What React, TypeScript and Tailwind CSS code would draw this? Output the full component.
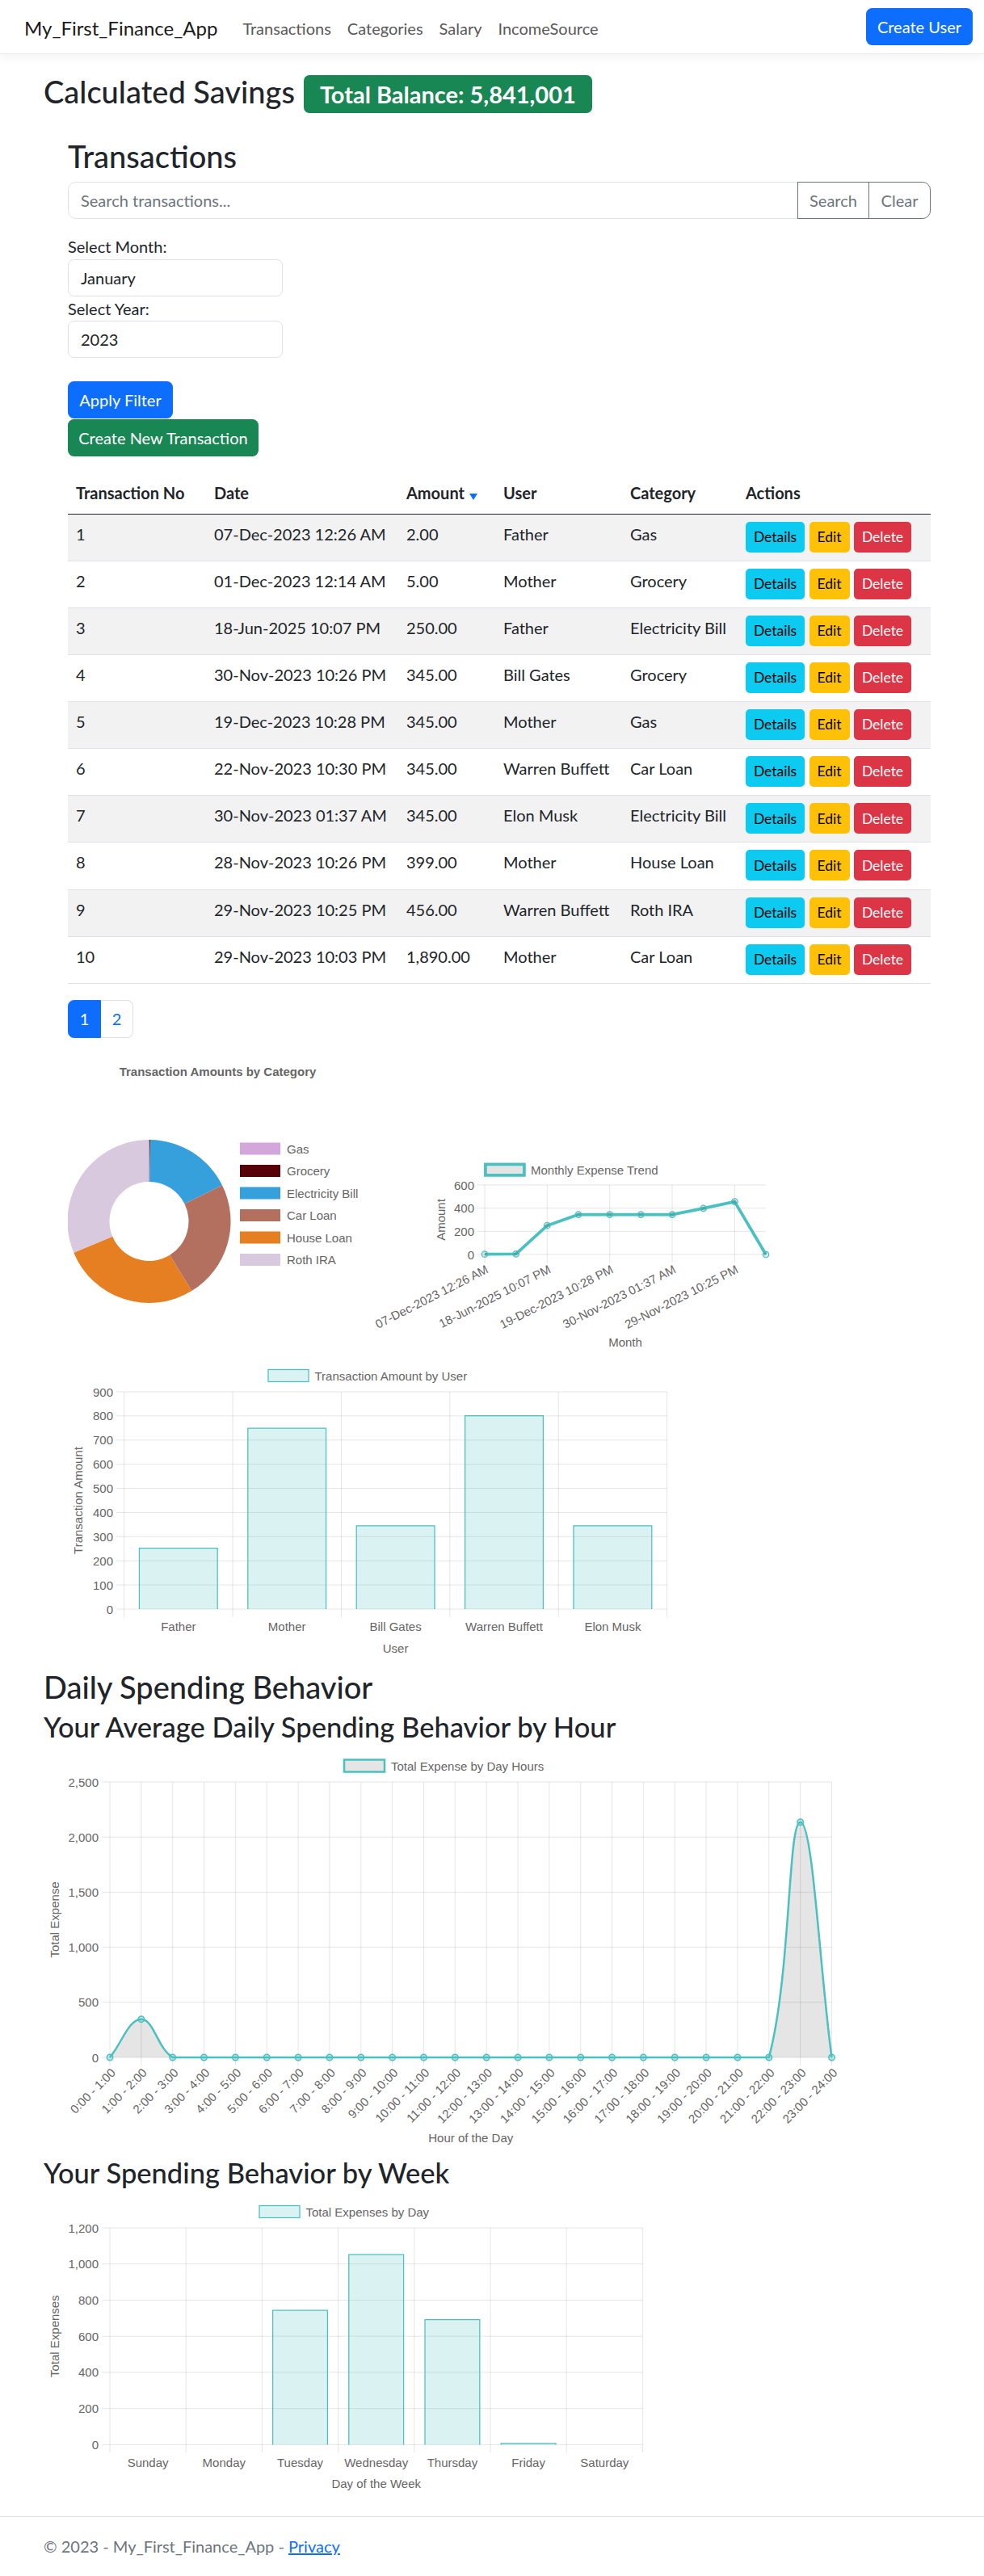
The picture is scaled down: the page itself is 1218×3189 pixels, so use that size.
import React from 'react';

const TEAL = 'rgb(75,192,192)';
const GRID = 'rgba(0,0,0,0.1)';
const INK = '#666';
const CHART_FONT = '"Liberation Sans", Arial, Helvetica, sans-serif';

const rows: [number, string, string, string, string][] = [
  [1, '07-Dec-2023 12:26 AM', '2.00', 'Father', 'Gas'],
  [2, '01-Dec-2023 12:14 AM', '5.00', 'Mother', 'Grocery'],
  [3, '18-Jun-2025 10:07 PM', '250.00', 'Father', 'Electricity Bill'],
  [4, '30-Nov-2023 10:26 PM', '345.00', 'Bill Gates', 'Grocery'],
  [5, '19-Dec-2023 10:28 PM', '345.00', 'Mother', 'Gas'],
  [6, '22-Nov-2023 10:30 PM', '345.00', 'Warren Buffett', 'Car Loan'],
  [7, '30-Nov-2023 01:37 AM', '345.00', 'Elon Musk', 'Electricity Bill'],
  [8, '28-Nov-2023 10:26 PM', '399.00', 'Mother', 'House Loan'],
  [9, '29-Nov-2023 10:25 PM', '456.00', 'Warren Buffett', 'Roth IRA'],
  [10, '29-Nov-2023 10:03 PM', '1,890.00', 'Mother', 'Car Loan'],
];

const cols = ['w-[171px]', 'w-[238px]', 'w-[120px]', 'w-[157px]', 'w-[143px]', 'w-[239px]'];

type TProps = { x: number; y: number; a?: 'start' | 'middle' | 'end'; rot?: number; bold?: boolean; children: React.ReactNode };

// chart.js style label, centred vertically on (x, y)
const T = ({ x, y, a = 'middle', rot = 0, bold, children }: TProps) => (
  <text
    transform={`translate(${x} ${y}) rotate(${rot})`}
    textAnchor={a}
    dominantBaseline="central"
    fontSize={15}
    fontWeight={bold ? 700 : 400}
    fill={INK}
    fontFamily={CHART_FONT}
  >
    {children}
  </text>
);

const fmt = (n: number) => n.toLocaleString('en-US');

function DonutChart() {
  const cx = 184.5, cy = 1512, R = 101, r = 49;
  const pt = (rad: number, deg: number) => {
    const a = (deg * Math.PI) / 180;
    return [cx + rad * Math.sin(a), cy - rad * Math.cos(a)];
  };
  const arc = (a0: number, a1: number) => {
    const large = a1 - a0 > 180 ? 1 : 0;
    const [x0, y0] = pt(R, a0);
    const [x1, y1] = pt(R, a1);
    const [x2, y2] = pt(r, a1);
    const [x3, y3] = pt(r, a0);
    return `M${x0} ${y0}A${R} ${R} 0 ${large} 1 ${x1} ${y1}L${x2} ${y2}A${r} ${r} 0 ${large} 0 ${x3} ${y3}Z`;
  };
  const slices = [
    { label: 'Gas', color: '#d4a7dc', a0: 0, a1: 0 },
    { label: 'Grocery', color: '#560008', a0: 0, a1: 0.8 },
    { label: 'Electricity Bill', color: '#36a0dd', a0: 0.8, a1: 63.7 },
    { label: 'Car Loan', color: '#b4705f', a0: 63.7, a1: 148.5 },
    { label: 'House Loan', color: '#e67e22', a0: 148.5, a1: 247.4 },
    { label: 'Roth IRA', color: '#d9c9df', a0: 247.4, a1: 360 },
  ];
  return (
    <svg width={368} height={385} className="block shrink-0">
      <g transform="translate(-84 -1295)">
        <T x={269.5} y={1326} bold>
          Transaction Amounts by Category
        </T>
        {slices.map((s) => (s.a1 > s.a0 ? <path key={s.label} d={arc(s.a0, s.a1 - 0.001)} fill={s.color} /> : null))}
        {slices.map((s, i) => {
          const yc = 1422 + i * 27.5;
          return (
            <g key={s.label}>
              <rect x={297} y={yc - 7.5} width={50} height={15} fill={s.color} />
              <T x={355} y={yc} a="start">
                {s.label}
              </T>
            </g>
          );
        })}
      </g>
    </svg>
  );
}

function TrendChart() {
  const vals = [2, 5, 250, 345, 345, 345, 345, 399, 456, 0];
  const labels = ['07-Dec-2023 12:26 AM', '18-Jun-2025 10:07 PM', '19-Dec-2023 10:28 PM', '30-Nov-2023 01:37 AM', '29-Nov-2023 10:25 PM'];
  const x = (i: number) => 600 + i * 38.67;
  const y = (v: number) => 1553 - (v * 86) / 600;
  const line = vals.map((v, i) => `${i ? 'L' : 'M'}${x(i)} ${y(v)}`).join('');
  return (
    <svg width={512} height={385} className="block shrink-0">
      <g transform="translate(-452 -1295)">
        <rect x={600.9} y={1441.4} width={48} height={13.5} fill="rgba(0,0,0,0.1)" stroke={TEAL} strokeWidth={3.75} />
        <T x={657} y={1448.5} a="start">
          Monthly Expense Trend
        </T>
        {[0, 200, 400, 600].map((v) => (
          <g key={v}>
            <line x1={590} x2={948} y1={y(v)} y2={y(v)} stroke={GRID} />
            <T x={587} y={y(v)} a="end">
              {v}
            </T>
          </g>
        ))}
        {[0, 2, 4, 6, 8].map((i, k) => (
          <g key={i}>
            <line x1={x(i)} x2={x(i)} y1={1467} y2={1563} stroke={GRID} />
            <T x={x(i) + 3} y={1570} a="end" rot={-27}>
              {labels[k]}
            </T>
          </g>
        ))}
        <path d={line} fill="none" stroke={TEAL} strokeWidth={3.75} strokeLinejoin="round" />
        {vals.map((v, i) => (
          <circle key={i} cx={x(i)} cy={y(v)} r={3.75} fill="rgba(0,0,0,0.1)" stroke={TEAL} strokeWidth={1.25} />
        ))}
        <T x={545} y={1510} rot={-90}>
          Amount
        </T>
        <T x={774} y={1661}>
          Month
        </T>
      </g>
    </svg>
  );
}

type BarProps = {
  ox: number; oy: number; w: number; h: number;
  left: number; right: number; top: number; bottom: number;
  max: number; step: number; cats: string[]; vals: number[];
  legend: string; legendX: number; legendY: number;
  yTitle: string; yTitleX: number; xTitle: string; xTitleY: number; labelY: number; labelRight: number;
};

function BarChart(p: BarProps) {
  const cw = (p.right - p.left) / p.cats.length;
  const y = (v: number) => p.bottom - (v * (p.bottom - p.top)) / p.max;
  const ticks: number[] = [];
  for (let v = 0; v <= p.max; v += p.step) ticks.push(v);
  const bw = cw * 0.72;
  return (
    <svg width={p.w} height={p.h} className="block">
      <g transform={`translate(${-p.ox} ${-p.oy})`}>
        <rect x={p.legendX} y={p.legendY - 7.5} width={50} height={15} fill="rgba(75,192,192,0.2)" stroke={TEAL} strokeWidth={1.25} />
        <T x={p.legendX + 57.5} y={p.legendY} a="start">
          {p.legend}
        </T>
        {ticks.map((v) => (
          <g key={v}>
            <line x1={p.left - 10} x2={p.right} y1={y(v)} y2={y(v)} stroke={GRID} />
            <T x={p.labelRight} y={y(v)} a="end">
              {fmt(v)}
            </T>
          </g>
        ))}
        {p.cats.map((_, k) => (
          <line key={k} x1={p.left + k * cw} x2={p.left + k * cw} y1={p.top} y2={p.bottom + 10} stroke={GRID} />
        ))}
        <line x1={p.right} x2={p.right} y1={p.top} y2={p.bottom + 10} stroke={GRID} />
        {p.vals.map((v, k) => {
          if (!v) return null;
          const x0 = p.left + k * cw + (cw - bw) / 2;
          const x1 = x0 + bw;
          const yt = y(v);
          return (
            <g key={k}>
              <rect x={x0} y={yt} width={bw} height={p.bottom - yt} fill="rgba(75,192,192,0.2)" />
              <path d={`M${x0} ${p.bottom}L${x0} ${yt}L${x1} ${yt}L${x1} ${p.bottom}`} fill="none" stroke={TEAL} strokeWidth={1.25} />
            </g>
          );
        })}
        {p.cats.map((c, k) => (
          <T key={c} x={p.left + (k + 0.5) * cw} y={p.labelY}>
            {c}
          </T>
        ))}
        <T x={p.yTitleX} y={(p.top + p.bottom) / 2} rot={-90}>
          {p.yTitle}
        </T>
        <T x={(p.left + p.right) / 2} y={p.xTitleY}>
          {p.xTitle}
        </T>
      </g>
    </svg>
  );
}

type Pt = { x: number; y: number };

// same control points as chart.js spline with tension, capped to the chart area
function spline(pts: Pt[], t: number, top: number, bottom: number) {
  const clamp = (v: number) => Math.min(bottom, Math.max(top, v));
  const cps = pts.map((p, i) => {
    const prev = pts[i - 1] ?? p;
    const next = pts[i + 1] ?? p;
    const d01 = Math.hypot(p.x - prev.x, p.y - prev.y);
    const d12 = Math.hypot(next.x - p.x, next.y - p.y);
    const sum = d01 + d12;
    const fa = sum ? (t * d01) / sum : 0;
    const fb = sum ? (t * d12) / sum : 0;
    return {
      px: p.x - fa * (next.x - prev.x),
      py: clamp(p.y - fa * (next.y - prev.y)),
      nx: p.x + fb * (next.x - prev.x),
      ny: clamp(p.y + fb * (next.y - prev.y)),
    };
  });
  let d = `M${pts[0].x} ${pts[0].y}`;
  for (let i = 1; i < pts.length; i++) {
    d += `C${cps[i - 1].nx} ${cps[i - 1].ny} ${cps[i].px} ${cps[i].py} ${pts[i].x} ${pts[i].y}`;
  }
  return d;
}

function HourChart() {
  const left = 136, right = 1029.5, top = 2206, bottom = 2547;
  const vals = Array.from({ length: 24 }, (_, i) => (i === 1 ? 347 : i === 22 ? 2135 : 0));
  const step = (right - left) / 23;
  const x = (i: number) => left + i * step;
  const y = (v: number) => bottom - (v * (bottom - top)) / 2500;
  const pts = vals.map((v, i) => ({ x: x(i), y: y(v) }));
  const curve = spline(pts, 0.4, top, bottom);
  return (
    <svg width={1000} height={512} className="block">
      <g transform="translate(-54 -2158)">
        <rect x={426} y={2178.5} width={50} height={15} fill="rgba(0,0,0,0.1)" stroke={TEAL} strokeWidth={2.5} />
        <T x={484} y={2186} a="start">
          Total Expense by Day Hours
        </T>
        {[0, 500, 1000, 1500, 2000, 2500].map((v) => (
          <g key={v}>
            <line x1={left - 10} x2={right} y1={y(v)} y2={y(v)} stroke={GRID} />
            <T x={122} y={y(v)} a="end">
              {fmt(v)}
            </T>
          </g>
        ))}
        {vals.map((_, i) => (
          <g key={i}>
            <line x1={x(i)} x2={x(i)} y1={top} y2={bottom + 10} stroke={GRID} />
            <T x={x(i) + 4} y={2563} a="end" rot={-45}>
              {`${i}:00 - ${i + 1}:00`}
            </T>
          </g>
        ))}
        <path d={`${curve}L${right} ${bottom}L${left} ${bottom}Z`} fill="rgba(0,0,0,0.1)" />
        <path d={curve} fill="none" stroke={TEAL} strokeWidth={2.5} />
        {pts.map((p, i) => (
          <circle key={i} cx={p.x} cy={p.y} r={3.75} fill="rgba(75,192,192,0.35)" stroke={TEAL} strokeWidth={1.5} />
        ))}
        <T x={67.6} y={(top + bottom) / 2} rot={-90}>
          Total Expense
        </T>
        <T x={(left + right) / 2} y={2646.5}>
          Hour of the Day
        </T>
      </g>
    </svg>
  );
}

const btn = 'flex h-[38px] items-center justify-center rounded-[5px] text-[17.5px] leading-none';

export default function App() {
  return (
    <div className="min-h-screen bg-white font-['Lato','Noto_Sans',sans-serif] text-[#212529]">
      <nav className="flex h-[67px] items-center justify-between border-b border-[#e9e9e9] bg-white pl-[30px] pr-[14px] shadow-[0_4px_12px_rgba(0,0,0,0.05)]">
        <div className="flex items-center pt-[4px]">
          <a className="mr-[21px] text-[24px] leading-[30px] text-[#1a1a1a]">My_First_Finance_App</a>
          {['Transactions', 'Categories', 'Salary', 'IncomeSource'].map((l) => (
            <a key={l} className="px-[10px] text-[20px] leading-[30px] text-[#595959]">
              {l}
            </a>
          ))}
        </div>
        <button className="h-[46px] w-[132px] rounded-[7.5px] bg-[#0d6efd] text-[20px] text-white">Create User</button>
      </nav>

      <main className="pl-[54px]">
        <div className="mt-[26px] flex h-[47px] items-center gap-[11px]">
          <h2 className="pb-[7px] text-[38px] font-medium leading-[40px]">Calculated Savings</h2>
          <span className="flex h-[47px] items-center rounded-[7px] bg-[#198754] px-[20px] text-[29px] font-bold leading-none text-white">
            Total Balance: 5,841,001
          </span>
        </div>

        <section className="ml-[30px] w-[1068px]">
          <h2 className="mt-[29px] h-[48px] text-[38px] font-medium leading-[48px]">Transactions</h2>

          <div className="mt-[8px] flex h-[46px] text-[20px]">
            <input
              placeholder="Search transactions..."
              className="min-w-0 flex-1 rounded-l-[10px] border border-[#dee2e6] px-[15px] outline-none placeholder:text-[#6c757d]"
            />
            <button className="-ml-px w-[89px] border border-[#6c757d] text-[#6c757d]">Search</button>
            <button className="-ml-px w-[77px] rounded-r-[10px] border border-[#6c757d] text-[#6c757d]">Clear</button>
          </div>

          <label className="mt-[19px] block text-[20px] leading-[30px]">Select Month:</label>
          <div className="mt-px flex h-[46px] w-[266px] items-center rounded-[7.5px] border border-[#dee2e6] px-[15px] text-[20px]">January</div>
          <label className="block text-[20px] leading-[30px]">Select Year:</label>
          <div className="flex h-[46px] w-[266px] items-center rounded-[7.5px] border border-[#dee2e6] px-[15px] text-[20px]">2023</div>

          <button className="mt-[29px] block h-[46px] w-[130px] rounded-[7.5px] bg-[#0d6efd] text-[20px] text-white">Apply Filter</button>
          <button className="mt-px block h-[46px] w-[236px] rounded-[7.5px] bg-[#198754] text-[20px] text-white">Create New Transaction</button>

          <div className="mt-[20px] text-[20px] leading-[30px]">
            <div className="flex h-[51.5px] items-start border-b-[1.5px] border-[#212529] pt-[10px] font-bold">
              {['Transaction No', 'Date', 'Amount', 'User', 'Category', 'Actions'].map((h, i) => (
                <div key={h} className={`${cols[i]} flex h-[30px] items-center px-[10px]`}>
                  {h}
                  {h === 'Amount' && (
                    <svg width={10} height={8} className="ml-[6px] mt-[10px]">
                      <polygon points="0,0 10,0 5,8" fill="#0d6efd" />
                    </svg>
                  )}
                </div>
              ))}
            </div>
            {rows.map((r, idx) => (
              <div key={r[0]} className={`flex h-[58.15px] border-b border-[#dee2e6] pt-[9px] ${idx % 2 === 0 ? 'bg-[#f2f2f2]' : 'bg-white'}`}>
                {r.map((c, i) => (
                  <div key={i} className={`${cols[i]} px-[10px]`}>
                    {c}
                  </div>
                ))}
                <div className={`${cols[5]} flex gap-[5.5px] px-[10px]`}>
                  <button className={`${btn} w-[73px] bg-[#0dcaf0] text-black`}>Details</button>
                  <button className={`${btn} w-[50px] bg-[#ffc107] text-black`}>Edit</button>
                  <button className={`${btn} w-[71px] bg-[#dc3545] text-white`}>Delete</button>
                </div>
              </div>
            ))}
          </div>

          <div className="mt-[20px] flex h-[47px] text-[20px]">
            <span className="flex w-[41px] items-center justify-center rounded-l-[7.5px] border border-[#0d6efd] bg-[#0d6efd] text-white">1</span>
            <span className="flex w-[40px] items-center justify-center rounded-r-[7.5px] border border-l-0 border-[#dee2e6] text-[#0d6efd]">2</span>
          </div>

          <div className="mt-[10px] flex">
            <DonutChart />
            <TrendChart />
          </div>

          <BarChart
            ox={84} oy={1680} w={766} h={384}
            left={153.6} right={825.6} top={1723} bottom={1992}
            max={900} step={100}
            cats={['Father', 'Mother', 'Bill Gates', 'Warren Buffett', 'Elon Musk']}
            vals={[252, 749, 345, 801, 345]}
            legend="Transaction Amount by User" legendX={332} legendY={1703}
            yTitle="Transaction Amount" yTitleX={96}
            xTitle="User" xTitleY={2040} labelY={2013} labelRight={140}
          />
        </section>

        <h2 className="h-[48px] text-[38px] font-medium leading-[48px]">Daily Spending Behavior</h2>
        <h3 className="mt-[6px] h-[40px] text-[34.5px] font-medium leading-[40px]">Your Average Daily Spending Behavior by Hour</h3>
        <HourChart />
        <h3 className="h-[40px] text-[34.5px] font-medium leading-[40px]">Your Spending Behavior by Week</h3>
        <BarChart
          ox={54} oy={2710} w={810} h={405}
          left={136} right={795.4} top={2758} bottom={3026.4}
          max={1200} step={200}
          cats={['Sunday', 'Monday', 'Tuesday', 'Wednesday', 'Thursday', 'Friday', 'Saturday']}
          vals={[0, 0, 743, 1052, 692, 7, 0]}
          legend="Total Expenses by Day" legendX={321} legendY={2738}
          yTitle="Total Expenses" yTitleX={67}
          xTitle="Day of the Week" xTitleY={3074.6} labelY={3048} labelRight={122}
        />
      </main>

      <footer className="h-[74px] border-t border-[#dee2e6] pl-[54px] text-[20px] leading-[73px] text-[#6c757d]">
        © 2023 - My_First_Finance_App - <a className="text-[#0d6efd] underline">Privacy</a>
      </footer>
    </div>
  );
}
